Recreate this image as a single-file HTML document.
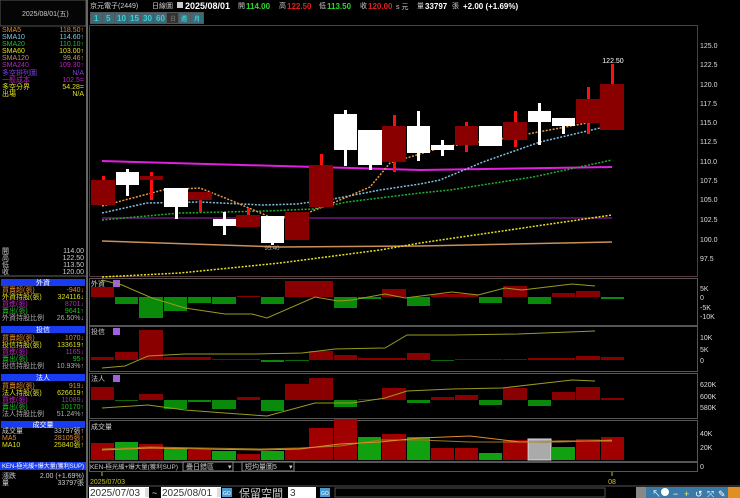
<!DOCTYPE html><html><head><meta charset="utf-8"><style>
html,body{margin:0;padding:0;background:#000;width:740px;height:498px;overflow:hidden}
svg{display:block}
text{font-family:"Liberation Sans","Noto Sans CJK TC",sans-serif}
.s{font-size:7px}
</style></head><body>
<svg width="740" height="498" viewBox="0 0 740 498" xmlns="http://www.w3.org/2000/svg">
<rect width="740" height="498" fill="#000"/>
<rect x="0" y="0" width="86" height="26" fill="#050505" stroke="#555" stroke-width="1"/>
<text x="22" y="16" class="s" fill="#ccc">2025/08/01(五)</text>
<g class="s">
<text x="2" y="32" fill="#e08a2a">SMA5</text><text x="84" y="32" fill="#e08a2a" text-anchor="end">118.50↑</text>
<text x="2" y="39" fill="#7ec8e8">SMA10</text><text x="84" y="39" fill="#7ec8e8" text-anchor="end">114.60↑</text>
<text x="2" y="46" fill="#20c020">SMA20</text><text x="84" y="46" fill="#20c020" text-anchor="end">110.10↑</text>
<text x="2" y="53" fill="#e0e020">SMA60</text><text x="84" y="53" fill="#e0e020" text-anchor="end">103.00↑</text>
<text x="2" y="60" fill="#c09060">SMA120</text><text x="84" y="60" fill="#c09060" text-anchor="end">99.46↑</text>
<text x="2" y="67" fill="#c020c0">SMA240</text><text x="84" y="67" fill="#c020c0" text-anchor="end">109.30↑</text>
<text x="2" y="75" fill="#8040e0">多空排列圖</text><text x="84" y="75" fill="#8040e0" text-anchor="end">N/A</text>
<text x="2" y="82" fill="#c020c0">一般成本</text><text x="84" y="82" fill="#c020c0" text-anchor="end">102.5=</text>
<text x="2" y="89" fill="#e0e020">多空分界</text><text x="84" y="89" fill="#e0e020" text-anchor="end">54.28=</text>
<text x="2" y="96" fill="#e0e020">出場</text><text x="84" y="96" fill="#e0e020" text-anchor="end">N/A</text>
<text x="2" y="253" fill="#ccc">開</text><text x="84" y="253" fill="#ccc" text-anchor="end">114.00</text>
<text x="2" y="260" fill="#ccc">高</text><text x="84" y="260" fill="#ccc" text-anchor="end">122.50</text>
<text x="2" y="267" fill="#ccc">低</text><text x="84" y="267" fill="#ccc" text-anchor="end">113.50</text>
<text x="2" y="274" fill="#ccc">收</text><text x="84" y="274" fill="#ccc" text-anchor="end">120.00</text>
</g>
<line x1="0" y1="276" x2="86" y2="276" stroke="#666"/>
<rect x="1" y="279" width="84" height="7" fill="#1a3cf0"/><text x="43" y="285" class="s" fill="#fff" text-anchor="middle">外資</text>
<g class="s">
<text x="2" y="292" fill="#e08a2a">買賣超(張)</text><text x="84" y="292" fill="#e08a2a" text-anchor="end">-940↓</text>
<text x="2" y="299" fill="#e0e020">外資持股(張)</text><text x="84" y="299" fill="#e0e020" text-anchor="end">324116↓</text>
<text x="2" y="306" fill="#c020c0">買進(張)</text><text x="84" y="306" fill="#c020c0" text-anchor="end">8701↓</text>
<text x="2" y="313" fill="#20c020">賣出(張)</text><text x="84" y="313" fill="#20c020" text-anchor="end">9641↑</text>
<text x="2" y="320" fill="#aaa">外資持股比例</text><text x="84" y="320" fill="#aaa" text-anchor="end">26.50%↓</text>
</g>
<rect x="1" y="326" width="84" height="7" fill="#1a3cf0"/><text x="43" y="332" class="s" fill="#fff" text-anchor="middle">投信</text>
<g class="s">
<text x="2" y="340" fill="#e08a2a">買賣超(張)</text><text x="84" y="340" fill="#e08a2a" text-anchor="end">1070↓</text>
<text x="2" y="347" fill="#e0e020">投信持股(張)</text><text x="84" y="347" fill="#e0e020" text-anchor="end">133619↑</text>
<text x="2" y="354" fill="#c020c0">買進(張)</text><text x="84" y="354" fill="#c020c0" text-anchor="end">1165↓</text>
<text x="2" y="361" fill="#20c020">賣出(張)</text><text x="84" y="361" fill="#20c020" text-anchor="end">95↑</text>
<text x="2" y="368" fill="#aaa">投信持股比例</text><text x="84" y="368" fill="#aaa" text-anchor="end">10.93%↑</text>
</g>
<rect x="1" y="374" width="84" height="7" fill="#1a3cf0"/><text x="43" y="380" class="s" fill="#fff" text-anchor="middle">法人</text>
<g class="s">
<text x="2" y="388" fill="#e08a2a">買賣超(張)</text><text x="84" y="388" fill="#e08a2a" text-anchor="end">919↓</text>
<text x="2" y="395" fill="#e0e020">法人持股(張)</text><text x="84" y="395" fill="#e0e020" text-anchor="end">626619↑</text>
<text x="2" y="402" fill="#c020c0">買進(張)</text><text x="84" y="402" fill="#c020c0" text-anchor="end">11089↓</text>
<text x="2" y="409" fill="#20c020">賣出(張)</text><text x="84" y="409" fill="#20c020" text-anchor="end">10170↑</text>
<text x="2" y="416" fill="#aaa">法人持股比例</text><text x="84" y="416" fill="#aaa" text-anchor="end">51.24%↑</text>
</g>
<rect x="1" y="421" width="84" height="7" fill="#1a3cf0"/><text x="43" y="427" class="s" fill="#fff" text-anchor="middle">成交量</text>
<g class="s">
<text x="2" y="433" fill="#ccc">成交量</text><text x="84" y="433" fill="#ccc" text-anchor="end">33797張↑</text>
<text x="2" y="440" fill="#e08a2a">MA5</text><text x="84" y="440" fill="#e08a2a" text-anchor="end">28105張↑</text>
<text x="2" y="447" fill="#e0e020">MA10</text><text x="84" y="447" fill="#e0e020" text-anchor="end">25840張↑</text>
</g>
<rect x="0" y="462" width="86" height="8" fill="#1a3cf0"/><text x="2" y="468" font-size="6" fill="#fff" textLength="82" lengthAdjust="spacingAndGlyphs">KEN-極光緩+爆大量(獲利SUP)</text>
<text x="2" y="478" class="s" fill="#ccc">漲跌</text><text x="84" y="478" class="s" fill="#ccc" text-anchor="end">2.00 (+1.69%)</text>
<text x="2" y="485" class="s" fill="#ccc">量</text><text x="84" y="485" class="s" fill="#ccc" text-anchor="end">33797張</text>
<line x1="87" y1="0" x2="87" y2="498" stroke="#666" stroke-width="2"/>

<text x="90" y="8" class="s" fill="#ccc">京元電子(2449)</text>
<text x="152" y="8" class="s" fill="#ccc">日線圖</text>
<rect x="177" y="2" width="6" height="6" fill="#ccc"/>
<text x="185" y="9" font-size="9" font-weight="bold" fill="#fff">2025/08/01</text>
<text x="238" y="8" class="s" fill="#ccc">開</text><text x="246" y="9" font-size="8" font-weight="bold" fill="#2ed82e">114.00</text>
<text x="279" y="8" class="s" fill="#ccc">高</text><text x="287" y="9" font-size="8" font-weight="bold" fill="#e02020">122.50</text>
<text x="319" y="8" class="s" fill="#ccc">低</text><text x="327" y="9" font-size="8" font-weight="bold" fill="#2ed82e">113.50</text>
<text x="360" y="8" class="s" fill="#ccc">收</text><text x="368" y="9" font-size="8" font-weight="bold" fill="#e02020">120.00</text>
<text x="396" y="9" class="s" fill="#ccc">s 元</text><text x="417" y="8" class="s" fill="#ccc">量</text>
<text x="425" y="9" font-size="8" font-weight="bold" fill="#fff">33797</text><text x="452" y="8" class="s" fill="#ccc">張</text>
<text x="463" y="9" font-size="8" font-weight="bold" fill="#fff">+2.00 (+1.69%)</text>
<g font-size="8" font-weight="bold" fill="#3ad0d0">
<rect x="90" y="12" width="114" height="12" fill="#555"/>
<rect x="91" y="13" width="11" height="10" fill="#3c6a78"/><text x="94" y="21">1</text>
<rect x="103" y="13" width="11" height="10" fill="#3c6a78"/><text x="106" y="21">5</text>
<rect x="115" y="13" width="12" height="10" fill="#3c6a78"/><text x="117" y="21">10</text>
<rect x="128" y="13" width="12" height="10" fill="#3c6a78"/><text x="130" y="21">15</text>
<rect x="141" y="13" width="12" height="10" fill="#3c6a78"/><text x="143" y="21">30</text>
<rect x="154" y="13" width="12" height="10" fill="#3c6a78"/><text x="156" y="21">60</text>
<rect x="167" y="13" width="11" height="10" fill="#333"/><text x="170" y="21" font-size="6" fill="#666">日</text>
<rect x="179" y="13" width="11" height="10" fill="#3c6a78"/><text x="181" y="21" font-size="6">週</text>
<rect x="191" y="13" width="12" height="10" fill="#3c6a78"/><text x="194" y="21" font-size="6">月</text>
</g>

<rect x="89.5" y="25.5" width="608" height="251" fill="none" stroke="#5a3a3a"/>
<g class="s" fill="#ddd">
<text x="700" y="48">125.0</text><text x="700" y="67">122.5</text><text x="700" y="87">120.0</text><text x="700" y="106">117.5</text>
<text x="700" y="125">115.0</text><text x="700" y="144">112.5</text><text x="700" y="164">110.0</text><text x="700" y="183">107.5</text>
<text x="700" y="202">105.0</text><text x="700" y="222">102.5</text><text x="700" y="242">100.0</text><text x="700" y="261">97.5</text>
</g>
<polyline points="102,161 420,170 612,167" fill="none" stroke="#e020e0" stroke-width="2"/>
<line x1="102" y1="218" x2="612" y2="218" stroke="#6a1a7a" stroke-width="1.5"/>
<polyline points="102,241 280,247 420,246 612,242" fill="none" stroke="#c8905a" stroke-width="1.5"/>
<polyline points="102,277 180,273 280,263 380,250 420,243 612,215" fill="none" stroke="#e8e020" stroke-width="1.5" stroke-dasharray="2,1.5"/>
<polyline points="102,220 180,213 267,211 313,209 347,202 420,193 450,190 533,177 612,160" fill="none" stroke="#20b030" stroke-width="1.5" stroke-dasharray="2,1.5"/>
<polyline points="102,213 147,203 200,202 263,205 297,204 333,199 380,190 420,184 440,180 483,162 540,142 613,125" fill="none" stroke="#7ec0e0" stroke-width="1.5" stroke-dasharray="2,1.5"/>
<polyline points="102,206 163,190 200,188 230,200 270,217 297,217 333,203 370,187 390,163 400,160 443,147 500,139 533,133 587,123 612,111" fill="none" stroke="#e89a40" stroke-width="1.5" stroke-dasharray="2,1.5"/>
<g fill="#8a0000">
<rect x="102" y="176" width="3" height="5" fill="#ff1010"/><rect x="91" y="180" width="24" height="25"/>
<rect x="150" y="172" width="3" height="28" fill="#ff1010"/><rect x="140" y="176" width="23" height="4"/>
<rect x="199" y="200" width="3" height="12" fill="#ff1010"/><rect x="188" y="192" width="24" height="8"/>
<rect x="247" y="208" width="3" height="8" fill="#ff1010"/><rect x="236" y="215" width="24" height="12"/>
<rect x="285" y="212" width="24" height="28"/>
<rect x="320" y="154" width="3" height="54" fill="#ff1010"/><rect x="309" y="165" width="24" height="42"/>
<rect x="393" y="115" width="3" height="57" fill="#ff1010"/><rect x="382" y="126" width="24" height="36"/>
<rect x="465" y="122" width="3" height="30" fill="#ff1010"/><rect x="455" y="126" width="23" height="19"/>
<rect x="514" y="111" width="3" height="36" fill="#ff1010"/><rect x="503" y="122" width="24" height="18"/>
<rect x="587" y="87" width="3" height="47" fill="#ff1010"/><rect x="576" y="99" width="24" height="24"/>
<rect x="611" y="64" width="3" height="66" fill="#ff1010"/><rect x="600" y="84" width="24" height="46"/>
</g>
<g fill="#fff">
<rect x="126" y="169" width="3" height="27"/><rect x="116" y="172" width="23" height="13"/>
<rect x="175" y="207" width="3" height="12"/><rect x="164" y="188" width="24" height="19"/>
<rect x="223" y="212" width="3" height="23"/><rect x="213" y="219" width="23" height="7"/>
<rect x="271" y="216" width="3" height="29"/><rect x="261" y="216" width="23" height="27"/>
<rect x="344" y="110" width="3" height="56"/><rect x="334" y="114" width="23" height="36"/>
<rect x="369" y="130" width="3" height="40"/><rect x="358" y="130" width="24" height="35"/>
<rect x="417" y="111" width="3" height="50"/><rect x="407" y="126" width="23" height="27"/>
<rect x="441" y="140" width="3" height="16"/><rect x="431" y="145" width="23" height="5"/>
<rect x="479" y="126" width="23" height="20"/>
<rect x="538" y="103" width="3" height="42"/><rect x="528" y="111" width="23" height="11"/>
<rect x="562" y="118" width="3" height="16"/><rect x="552" y="118" width="23" height="8"/>
</g>
<text x="613" y="63" class="s" fill="#fff" text-anchor="middle">122.50</text>
<text x="272" y="250" font-size="6" fill="#aaa" text-anchor="middle">95.40</text>

<g fill="none" stroke="#555">
<rect x="89.5" y="278.5" width="608" height="47"/>
<rect x="89.5" y="326.5" width="608" height="45"/>
<rect x="89.5" y="373.5" width="608" height="45"/>
<rect x="89.5" y="420.5" width="608" height="41"/>
<rect x="89.5" y="462.5" width="608" height="9"/>
</g>
<text x="91" y="286" class="s" fill="#ccc">外資</text><rect x="113" y="280" width="7" height="7" fill="#a060e0"/>
<text x="91" y="334" class="s" fill="#ccc">投信</text><rect x="113" y="328" width="7" height="7" fill="#a060e0"/>
<text x="91" y="381" class="s" fill="#ccc">法人</text><rect x="113" y="375" width="7" height="7" fill="#a060e0"/>
<text x="91" y="429" class="s" fill="#ccc">成交量</text>
<g class="s" fill="#ddd">
<text x="700" y="291">5K</text><text x="700" y="300">0</text><text x="700" y="310">-5K</text><text x="700" y="319">-10K</text>
<text x="700" y="340">10K</text><text x="700" y="352">5K</text><text x="700" y="363">0</text>
<text x="700" y="387">620K</text><text x="700" y="399">600K</text><text x="700" y="410">580K</text>
<text x="700" y="436">40K</text><text x="700" y="450">20K</text><text x="700" y="469">0</text>
</g>
<g>
<rect x="91" y="287" width="23" height="10" fill="#8a0000"/>
<rect x="115" y="297" width="23" height="7" fill="#0a8a0a"/>
<rect x="139" y="297" width="24" height="21" fill="#0a8a0a"/>
<rect x="164" y="297" width="23" height="14" fill="#0a8a0a"/>
<rect x="188" y="297" width="23" height="6" fill="#0a8a0a"/>
<rect x="212" y="297" width="24" height="7" fill="#0a8a0a"/>
<rect x="237" y="296" width="23" height="1" fill="#8a0000"/>
<rect x="261" y="297" width="23" height="7" fill="#0a8a0a"/>
<rect x="285" y="281" width="48" height="16" fill="#8a0000"/>
<rect x="334" y="297" width="23" height="11" fill="#0a8a0a"/>
<rect x="358" y="297" width="23" height="2" fill="#0a8a0a"/>
<rect x="382" y="289" width="24" height="8" fill="#8a0000"/>
<rect x="407" y="297" width="23" height="9" fill="#0a8a0a"/>
<rect x="431" y="294" width="47" height="3" fill="#8a0000"/>
<rect x="479" y="297" width="23" height="6" fill="#0a8a0a"/>
<rect x="503" y="286" width="24" height="11" fill="#8a0000"/>
<rect x="528" y="297" width="23" height="7" fill="#0a8a0a"/>
<rect x="552" y="293" width="23" height="4" fill="#8a0000"/>
<rect x="576" y="291" width="24" height="6" fill="#8a0000"/>
<rect x="601" y="297" width="23" height="2" fill="#0a8a0a"/>
</g>
<polyline points="102,280 122,285 152,298 185,308 225,314 252,314 267,318 315,297 338,301 352,300 385,294 405,298 452,292 478,295 505,288 522,290 572,284 595,286" fill="none" stroke="#9a9a20" stroke-width="1"/>
<g fill="#8a0000">
<rect x="91" y="357" width="23" height="3"/><rect x="115" y="352" width="23" height="8"/><rect x="139" y="330" width="24" height="30"/>
<rect x="164" y="357" width="47" height="3"/><rect x="212" y="359" width="48" height="1"/>
<rect x="261" y="360" width="23" height="2" fill="#0a8a0a"/><rect x="285" y="360" width="24" height="1" fill="#0a6a0a"/>
<rect x="309" y="351" width="24" height="9"/><rect x="334" y="355" width="23" height="5"/><rect x="358" y="358" width="48" height="2"/>
<rect x="407" y="353" width="23" height="7"/><rect x="431" y="360" width="23" height="1" fill="#0a6a0a"/>
<rect x="455" y="359" width="47" height="1"/><rect x="503" y="359" width="24" height="1"/>
<rect x="528" y="358" width="47" height="2"/><rect x="576" y="356" width="24" height="4"/><rect x="601" y="357" width="23" height="3"/>
</g>
<polyline points="102,368 125,366 148,356 185,354 252,354 302,353 335,349 385,348 407,335 452,335 518,334 595,331" fill="none" stroke="#9a9a20" stroke-width="1"/>
<g>
<rect x="91" y="387" width="23" height="13" fill="#8a0000"/>
<rect x="115" y="400" width="23" height="1" fill="#0a6a0a"/>
<rect x="139" y="394" width="24" height="6" fill="#8a0000"/>
<rect x="164" y="400" width="23" height="9" fill="#0a8a0a"/>
<rect x="188" y="400" width="23" height="2" fill="#0a8a0a"/>
<rect x="212" y="400" width="24" height="9" fill="#0a8a0a"/>
<rect x="237" y="397" width="23" height="3" fill="#8a0000"/>
<rect x="261" y="400" width="23" height="11" fill="#0a8a0a"/>
<rect x="285" y="384" width="24" height="16" fill="#8a0000"/>
<rect x="309" y="378" width="24" height="22" fill="#8a0000"/>
<rect x="334" y="400" width="23" height="7" fill="#0a8a0a"/>
<rect x="358" y="399" width="23" height="1" fill="#8a0000"/>
<rect x="382" y="388" width="24" height="12" fill="#8a0000"/>
<rect x="407" y="400" width="23" height="3" fill="#0a8a0a"/>
<rect x="431" y="397" width="23" height="3" fill="#8a0000"/>
<rect x="455" y="395" width="23" height="5" fill="#8a0000"/>
<rect x="479" y="400" width="23" height="5" fill="#0a8a0a"/>
<rect x="503" y="388" width="24" height="12" fill="#8a0000"/>
<rect x="528" y="400" width="23" height="6" fill="#0a8a0a"/>
<rect x="552" y="392" width="23" height="8" fill="#8a0000"/>
<rect x="576" y="387" width="24" height="13" fill="#8a0000"/>
<rect x="601" y="398" width="23" height="2" fill="#8a0000"/>
</g>
<polyline points="102,408 148,405 185,410 225,413 267,416 315,403 352,403 385,398 407,391 452,389 502,388 572,380 595,381" fill="none" stroke="#9a9a20" stroke-width="1"/>
<g>
<rect x="91" y="443" width="23" height="17" fill="#a00000"/>
<rect x="115" y="442" width="23" height="18" fill="#10a010"/>
<rect x="139" y="444" width="24" height="16" fill="#a00000"/>
<rect x="164" y="448" width="23" height="12" fill="#10a010"/>
<rect x="188" y="450" width="23" height="10" fill="#a00000"/>
<rect x="212" y="451" width="24" height="9" fill="#10a010"/>
<rect x="237" y="454" width="23" height="6" fill="#a00000"/>
<rect x="261" y="451" width="23" height="9" fill="#10a010"/>
<rect x="285" y="448" width="24" height="12" fill="#a00000"/>
<rect x="309" y="428" width="24" height="32" fill="#a00000"/>
<rect x="334" y="419" width="23" height="41" fill="#a00000"/>
<rect x="358" y="437" width="23" height="23" fill="#10a010"/>
<rect x="382" y="434" width="24" height="26" fill="#a00000"/>
<rect x="407" y="437" width="23" height="23" fill="#10a010"/>
<rect x="431" y="448" width="23" height="12" fill="#a00000"/>
<rect x="455" y="448" width="23" height="12" fill="#a00000"/>
<rect x="479" y="453" width="23" height="7" fill="#10a010"/>
<rect x="503" y="440" width="24" height="20" fill="#a00000"/>
<rect x="528" y="439" width="23" height="21" fill="#aaa" stroke="#ddd"/>
<rect x="552" y="447" width="23" height="13" fill="#10a010"/>
<rect x="576" y="439" width="24" height="21" fill="#a00000"/>
<rect x="601" y="437" width="23" height="23" fill="#a00000"/>
</g>
<polyline points="102,449 150,447 200,448 260,449 300,448 340,446 380,440 420,440 470,442 520,442 560,442 612,440" fill="none" stroke="#9a7a20" stroke-width="1"/>
<polyline points="102,450 150,448 200,449 260,450 300,449 340,444 380,442 420,438 470,436 520,442 560,441 612,441" fill="none" stroke="#e08a2a" stroke-width="1"/>
<text x="90" y="469" font-size="6" fill="#ccc" textLength="88" lengthAdjust="spacingAndGlyphs">KEN-極光緩+爆大量(獲利SUP)</text>
<rect x="183" y="462" width="50" height="9" fill="#000" stroke="#888"/><text x="186" y="469" class="s" fill="#ccc">疊日錯區</text><text x="228" y="469" class="s" fill="#ccc">▾</text>
<rect x="242" y="462" width="52" height="9" fill="#000" stroke="#888"/><text x="245" y="469" class="s" fill="#ccc">短均量圖5</text><text x="289" y="469" class="s" fill="#ccc">▾</text>
<line x1="102" y1="472" x2="102" y2="476" stroke="#bb2"/>
<text x="90" y="484" font-size="7" fill="#c8c820">2025/07/03</text>
<line x1="612" y1="472" x2="612" y2="476" stroke="#bb2"/>
<text x="612" y="484" font-size="7" fill="#c8c820" text-anchor="middle">08</text>
<line x1="88" y1="486" x2="740" y2="486" stroke="#555"/>
<rect x="89" y="487" width="60" height="11" fill="#fff"/><text x="90" y="496" font-size="10" fill="#333">2025/07/03</text>
<rect x="145" y="488" width="4" height="9" fill="#ddd"/>
<text x="152" y="496" font-size="9" fill="#ddd">~</text>
<rect x="161" y="487" width="60" height="11" fill="#fff"/><text x="162" y="496" font-size="10" fill="#333">2025/08/01</text>
<rect x="217" y="488" width="4" height="9" fill="#ddd"/>
<rect x="222" y="488" width="10" height="9" fill="#4a9ad0"/><text x="223" y="495" font-size="5" fill="#fff">GO</text>
<text x="239" y="497" font-size="11" fill="#ccc">保留空間</text>
<rect x="288" y="487" width="28" height="11" fill="#fff"/><text x="290" y="496" font-size="10" fill="#333">3</text>
<rect x="320" y="488" width="10" height="9" fill="#4a9ad0"/><text x="321" y="495" font-size="5" fill="#fff">GO</text>
<rect x="335" y="488" width="270" height="9" fill="none" stroke="#555"/>
<rect x="636" y="487" width="104" height="11" fill="#3a7aa8"/>
<rect x="636" y="487" width="10" height="11" fill="#888"/>
<g font-size="9" fill="#fff">
<text x="652" y="497">↖</text><circle cx="665" cy="492" r="4" fill="#fff"/>
<text x="673" y="497">−</text><text x="684" y="497" fill="#ee4">+</text><text x="695" y="497">↺</text><text x="707" y="497">⤧</text><text x="718" y="497">✎</text>
<rect x="728" y="487" width="12" height="11" fill="#e09020"/>
</g>
</svg>
</body></html>
